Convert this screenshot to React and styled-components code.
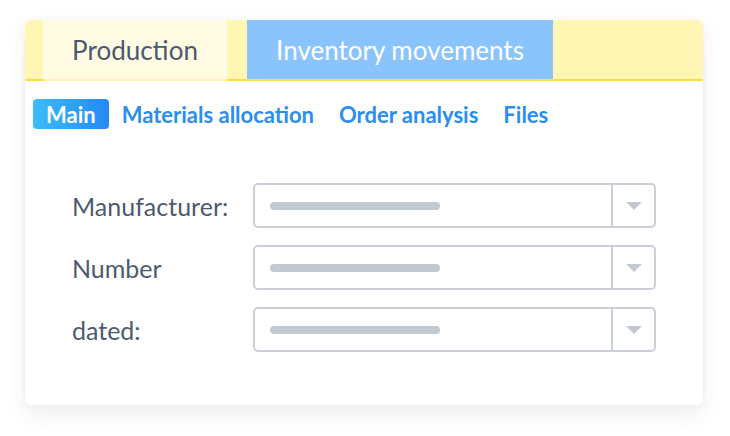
import React from 'react';
import styled, { createGlobalStyle } from 'styled-components';

const GlobalStyle = createGlobalStyle`
    html, body {
        margin: 0;
        padding: 0;
        background: #ffffff;
        font-family: Lato, "Open Sans", sans-serif;
    }
`;

const Page = styled.div`
    width: 730px;
    height: 436px;
    padding: 20px 27px 0 25px;
    box-sizing: border-box;
`;

const Card = styled.div`
    width: 678px;
    height: 385px;
    background: #ffffff;
    border-radius: 7px;
    overflow: hidden;
    box-shadow: 0 10px 22px rgba(40, 55, 80, 0.08), 0 0 6px rgba(40, 55, 80, 0.04);
    display: flex;
    flex-direction: column;
`;

const TabBar = styled.div`
    height: 59px;
    background: #fff6b4;
    border-bottom: 2px solid #ffd84f;
    display: flex;
    padding-left: 18px;
    gap: 20px;
`;

const Tab = styled.div`
    display: flex;
    align-items: center;
    justify-content: center;
    width: ${(p) => p.$width}px;
    height: ${(p) => (p.$active ? 61 : 60)}px;
    box-sizing: border-box;
    font-size: 26px;
    color: ${(p) => (p.$active ? '#4b5870' : '#ffffff')};
    background: ${(p) => (p.$active ? '#fffce3' : '#8bc4fc')};
    border-bottom: ${(p) => (p.$active ? '2px solid #fff1b8' : '1px solid #c9dcef')};
`;

const SubTabs = styled.div`
    display: flex;
    align-items: center;
    height: 30px;
    margin: 18px 0 0 8px;
`;

const SubTab = styled.div`
    height: 30px;
    display: flex;
    align-items: center;
    padding: 0 ${(p) => (p.$active ? 13 : 12)}px;
    margin-right: 1px;
    border-radius: 4px;
    font-size: 22px;
    font-weight: 700;
    color: ${(p) => (p.$active ? '#ffffff' : '#2a8ef0')};
    background: ${(p) => (p.$active ? 'linear-gradient(90deg, #3bbdfb, #2489f6)' : 'transparent')};
`;

const Form = styled.div`
    display: flex;
    flex-direction: column;
    gap: 17px;
    padding: 54px 47px 0 47px;
`;

const Row = styled.div`
    display: flex;
    align-items: center;
`;

const Label = styled.div`
    width: 181px;
    font-size: 25px;
    color: #4e5a70;
`;

const Select = styled.div`
    flex: 1;
    height: 45px;
    box-sizing: border-box;
    border: 2px solid #cacfd9;
    border-radius: 5px;
    display: flex;
`;

const Value = styled.div`
    flex: 1;
    display: flex;
    align-items: center;
    padding-left: 15px;
`;

const Placeholder = styled.div`
    width: 170px;
    height: 8px;
    border-radius: 4px;
    background: #c3c9d2;
`;

const Arrow = styled.div`
    width: 41px;
    border-left: 2px solid #cacfd9;
    display: flex;
    align-items: center;
    justify-content: center;
`;

const fields = ['Manufacturer:', 'Number', 'dated:'];

export default function App() {
    return (
        <Page>
            <GlobalStyle />
            <Card>
                <TabBar>
                    <Tab $active $width={184}>Production</Tab>
                    <Tab $width={306}>Inventory movements</Tab>
                </TabBar>
                <SubTabs>
                    <SubTab $active>Main</SubTab>
                    <SubTab>Materials allocation</SubTab>
                    <SubTab>Order analysis</SubTab>
                    <SubTab>Files</SubTab>
                </SubTabs>
                <Form>
                    {fields.map((name) => (
                        <Row key={name}>
                            <Label>{name}</Label>
                            <Select>
                                <Value>
                                    <Placeholder />
                                </Value>
                                <Arrow>
                                    <svg width="16" height="8" viewBox="0 0 16 8">
                                        <path d="M0 0 H16 L8 8 Z" fill="#c3c9d2" />
                                    </svg>
                                </Arrow>
                            </Select>
                        </Row>
                    ))}
                </Form>
            </Card>
        </Page>
    );
}
